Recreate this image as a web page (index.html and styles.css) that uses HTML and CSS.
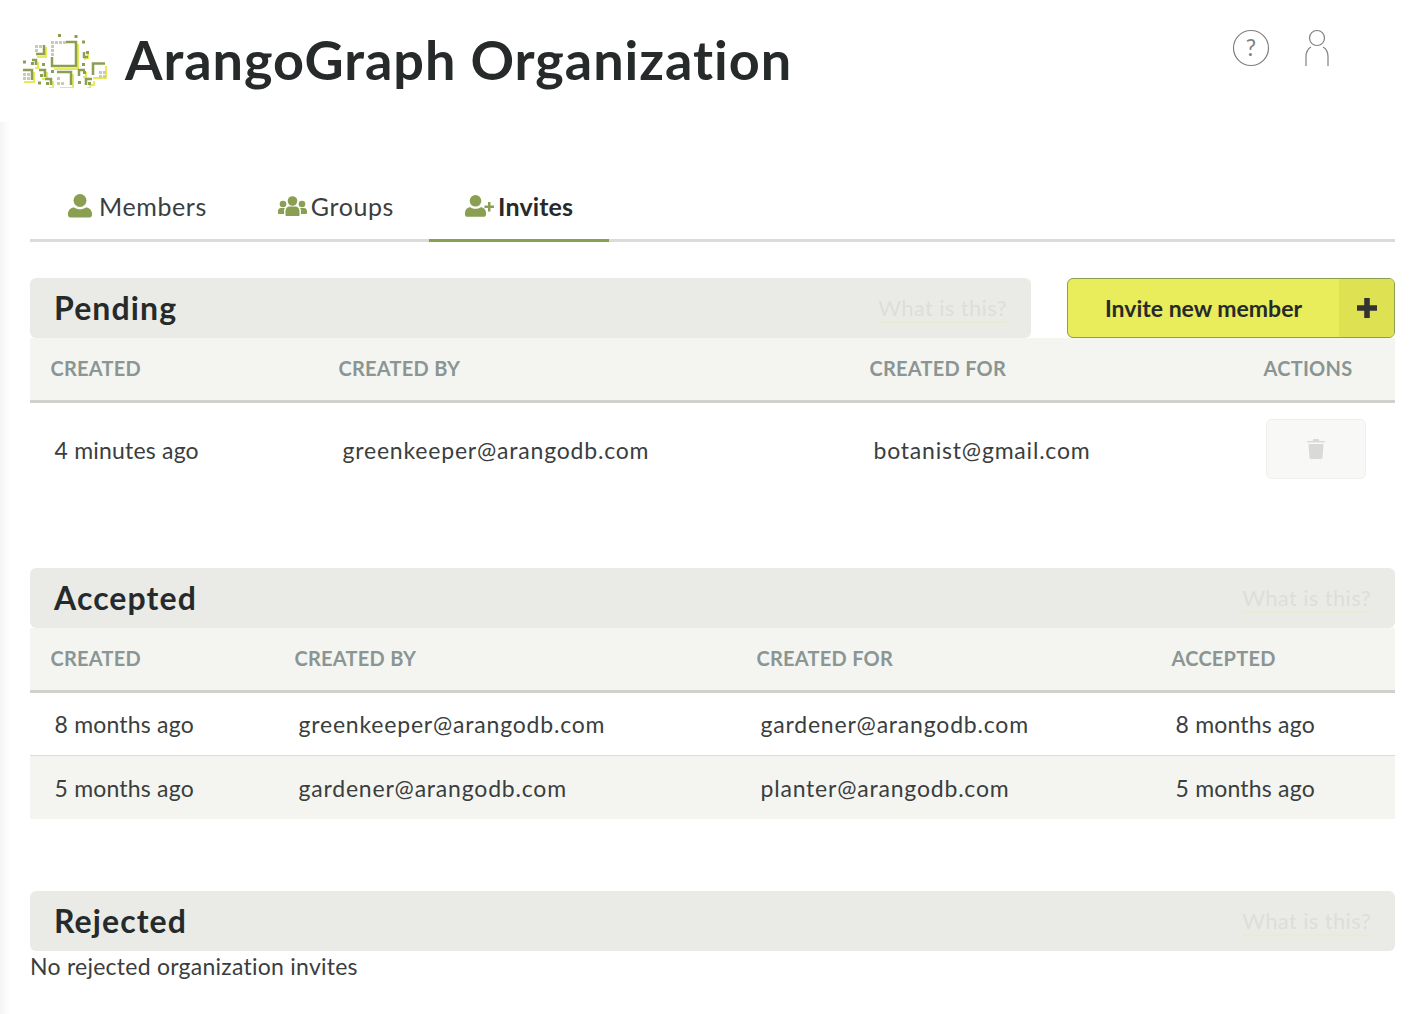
FILE: index.html
```html
<!DOCTYPE html>
<html lang="en">
<head>
    <meta charset="UTF-8">
    <title>ArangoGraph Organization</title>
    <link rel="stylesheet" href="styles.css">
</head>
<body>
    <div class="page">
        <header class="top-bar">
            <div class="brand">
                <svg class="logo" viewBox="23 32 86 56" width="86" height="56">
                    <g fill="none" stroke="#e8ea5a" stroke-width="2">
                        <path d="M78 44v25H54"/>
                        <path d="M46 47v10h-9"/>
                        <path d="M88 54v4h-3v2"/>
                        <path d="M38 62v6h-3"/>
                        <path d="M34 72v10h-10"/>
                        <path d="M47 72v7h-5"/>
                        <path d="M73 74v14H60"/>
                        <path d="M53 81v7h-4"/>
                        <path d="M86 72v5h-3"/>
                        <path d="M94 81v4h-4v3h-3"/>
                        <path d="M106 66v12H93"/>
                    </g>
                    <g fill="none" stroke="#8a9f52" stroke-width="2.500">
                        <path d="M66 42h10v24H52v-9"/>
                        <path d="M44 45v9h-8"/>
                        <path d="M84 52v5h4"/>
                        <path d="M32 60h4v5"/>
                        <path d="M23 70h9v10"/>
                        <path d="M39 70h6v7"/>
                        <path d="M57 72h14v13"/>
                        <path d="M45 79h6v6"/>
                        <path d="M85 70h-6v6"/>
                        <path d="M92 79h-6v6"/>
                        <path d="M105 63.500H93V75"/>
                    </g>
                    <g fill="#8a9f52">
                        <rect x="58" y="34" width="3" height="3"/><rect x="74.500" y="35" width="3" height="3"/>
                        <rect x="82" y="40.500" width="3" height="3"/><rect x="86" y="51" width="3" height="3"/>
                        <rect x="23" y="60.500" width="3" height="3"/><rect x="31" y="62" width="3" height="3"/>
                        <rect x="42" y="63" width="3" height="3"/><rect x="51" y="70" width="3" height="3"/>
                        <rect x="82" y="63" width="3" height="3"/><rect x="38" y="81.500" width="3" height="3"/>
                        <rect x="46" y="82" width="3" height="3"/><rect x="78" y="81" width="3" height="3"/>
                        <rect x="88" y="82" width="3" height="3"/><rect x="40" y="74" width="3" height="3"/>
                        <rect x="83" y="71" width="3" height="3"/>
                    </g>
                    <g fill="#c9ccb0">
                        <rect x="51" y="41" width="3" height="3"/><rect x="55" y="41" width="3" height="3"/>
                        <rect x="59" y="41" width="3" height="3"/><rect x="63" y="41" width="3" height="3"/>
                        <rect x="51" y="45" width="3" height="3"/><rect x="51" y="49" width="3" height="3"/>
                        <rect x="51" y="53" width="3" height="3"/><rect x="35" y="45" width="3" height="3"/>
                        <rect x="39" y="45" width="3" height="3"/><rect x="35" y="49" width="3" height="3"/>
                        <rect x="23" y="73" width="3" height="3"/><rect x="27" y="73" width="3" height="3"/>
                        <rect x="23" y="77" width="3" height="3"/><rect x="27" y="77" width="3" height="3"/>
                        <rect x="57" y="77" width="3" height="3"/><rect x="57" y="82" width="3" height="3"/>
                        <rect x="61" y="82" width="3" height="3"/><rect x="99" y="71" width="3" height="3"/>
                        <rect x="103" y="71" width="3" height="3"/><rect x="99" y="75" width="3" height="3"/>
                        <rect x="103" y="75" width="3" height="3"/>
                    </g>
                </svg>
                <h1>ArangoGraph Organization</h1>
            </div>
            <div class="top-icons">
                <svg class="help-icon" viewBox="0 0 38 38" width="38" height="38">
                    <circle cx="19" cy="19" r="17.500" fill="none" stroke="#808080" stroke-width="1.200"/>
                    <text x="19" y="27" text-anchor="middle">?</text>
                </svg>
                <svg class="user-icon" viewBox="0 0 28 38" width="28" height="38">
                    <g fill="none" stroke="#808080" stroke-width="1.200">
                        <circle cx="14" cy="9" r="7.500"/>
                        <path d="M8 18C4.500 20 3 23 3 28v9M20 18c3.500 2 5 5 5 10v9"/>
                    </g>
                </svg>
            </div>
        </header>

        <nav class="tabs">
            <a class="tab">
                <svg viewBox="0 0 24 24" width="24" height="24"><circle cx="12" cy="6.500" r="6.500"/><path d="M0 20c0-4 3-6.500 6-6.500 2 1.200 4 1.800 6 1.800s4-.6 6-1.800c3 0 6 2.500 6 6.500v1c0 1.500-1 2.500-2.500 2.500h-19C1 23.500 0 22.500 0 21z"/></svg>
                Members
            </a>
            <a class="tab tab-groups">
                <svg viewBox="0 0 29 20" width="29" height="20"><circle cx="14.500" cy="5" r="4.800"/><circle cx="5" cy="8" r="3.300"/><circle cx="24" cy="8" r="3.300"/><path d="M7.500 19v-4c0-3 2-4.500 4-4.500h6c2 0 4 1.500 4 4.500v4c0 .6-.5 1-1 1h-12c-.5 0-1-.4-1-1z"/><path d="M0 17v-2c0-2 1.500-3 3-3h4c-.8 1-1 2-1 3.500V18H1c-.6 0-1-.4-1-1zM29 17v-2c0-2-1.500-3-3-3h-4c.8 1 1 2 1 3.500V18h5c.6 0 1-.4 1-1z"/></svg>
                Groups
            </a>
            <a class="tab active">
                <svg viewBox="0 0 29 22" width="29" height="22"><circle cx="10.500" cy="5.800" r="5.800"/><path d="M0 18c0-3.500 2.500-5.800 5.200-5.800 1.800 1 3.500 1.600 5.300 1.600s3.500-.6 5.300-1.600c2.700 0 5.200 2.300 5.200 5.800v1.500c0 1.400-1 2.300-2.300 2.300H2.300C1 21.800 0 20.900 0 19.500z"/><path d="M23 7h2.500v3.500H29V13h-3.500v3.500H23V13h-3.500v-2.500H23z"/></svg>
                Invites
            </a>
        </nav>

        <section class="block">
            <div class="pending-head">
                <div class="section-head">
                    <h2>Pending</h2>
                    <a class="what-link">What is this?</a>
                </div>
                <button class="invite-btn">
                    <span class="invite-label">Invite new member</span>
                    <span class="invite-plus">
                        <svg viewBox="0 0 18 18" width="20" height="20"><path d="M6.500 0h5v6.500H18v5h-6.500V18h-5v-6.500H0v-5h6.500z"/></svg>
                    </span>
                </button>
            </div>
            <table class="invite-table pending-table">
                <thead>
                    <tr><th>CREATED</th><th>CREATED BY</th><th>CREATED FOR</th><th>ACTIONS</th></tr>
                </thead>
                <tbody>
                    <tr>
                        <td>4 minutes ago</td>
                        <td class="email">greenkeeper@arangodb.com</td>
                        <td class="email">botanist@gmail.com</td>
                        <td>
                            <button class="delete-btn">
                                <svg viewBox="0 0 18 21" width="18" height="21"><path d="M6.500 1h5l1 2H17c.6 0 1 .4 1 1v.500H0V4c0-.6.4-1 1-1h4.500z"/><path d="M1.500 6h15l-1 13.500c0 .8-.7 1.500-1.500 1.500H4c-.8 0-1.500-.7-1.500-1.500z"/></svg>
                            </button>
                        </td>
                    </tr>
                </tbody>
            </table>
        </section>

        <section class="block accepted-block">
            <div class="section-head">
                <h2>Accepted</h2>
                <a class="what-link">What is this?</a>
            </div>
            <table class="invite-table accepted-table">
                <thead>
                    <tr><th>CREATED</th><th>CREATED BY</th><th>CREATED FOR</th><th>ACCEPTED</th></tr>
                </thead>
                <tbody>
                    <tr>
                        <td>8 months ago</td>
                        <td class="email">greenkeeper@arangodb.com</td>
                        <td class="email">gardener@arangodb.com</td>
                        <td>8 months ago</td>
                    </tr>
                    <tr class="alt-row">
                        <td>5 months ago</td>
                        <td class="email">gardener@arangodb.com</td>
                        <td class="email">planter@arangodb.com</td>
                        <td>5 months ago</td>
                    </tr>
                </tbody>
            </table>
        </section>

        <section class="block rejected-block">
            <div class="section-head">
                <h2>Rejected</h2>
                <a class="what-link">What is this?</a>
            </div>
            <p class="empty-note">No rejected organization invites</p>
        </section>
    </div>
</body>
</html>
```

FILE: styles.css
```css
* {
    margin: 0;
    padding: 0;
    box-sizing: border-box;
}

html, body {
    height: 1014px;
    overflow: hidden;
}

body {
    background: white;
    color: #262a2a;
    font-family: Lato, 'Noto Sans', sans-serif;
}

.page {
    height: 1014px;
    padding: 0 28px 0 30px;
    background: linear-gradient(to right, #f4f4f4, white 10px);
}

.top-bar {
    display: flex;
    justify-content: space-between;
    height: 122px;
    margin: 0 -28px 0 -30px;
    padding: 0 92px 0 23px;
    background: white;
}

.brand {
    display: flex;
    align-items: flex-start;
    gap: 16px;
    padding-top: 32px;
}

.brand h1 {
    font-size: 54px;
    font-weight: 700;
    line-height: 56px;
    letter-spacing: 0.95px;
}

.top-icons {
    display: flex;
    gap: 33px;
    padding-top: 29px;
}

.help-icon text {
    font-family: Lato, sans-serif;
    font-size: 23px;
    fill: #808080;
}

.tabs {
    display: flex;
    height: 64px;
    margin-top: 56px;
    border-bottom: 3px solid #dbdbd9;
}

.tab {
    display: flex;
    align-items: center;
    gap: 7px;
    height: 64px;
    padding: 0 35px 5px 38px;
    border-bottom: 3px solid transparent;
    font-size: 25px;
    letter-spacing: 0.6px;
    color: #3a3e3e;
}

.tab svg {
    fill: #8a9f52;
}

.tab-groups {
    gap: 4px;
    padding-left: 36px;
}

.tab.active {
    gap: 4px;
    padding: 0 36px 5px 36px;
    border-bottom-color: #8a9f52;
    font-weight: 700;
    letter-spacing: 0.15px;
    color: #262a2a;
}

.block {
    margin-top: 36px;
}

.accepted-block {
    margin-top: 70px;
}

.rejected-block {
    margin-top: 72px;
}

.pending-head {
    display: flex;
    gap: 36px;
}

.pending-head .section-head {
    flex: 1;
}

.section-head {
    display: flex;
    align-items: center;
    justify-content: space-between;
    height: 60px;
    padding: 0 24px;
    background: #eaebe7;
    border-radius: 6px;
}

.section-head h2 {
    padding-bottom: 2px;
    font-size: 32px;
    font-weight: 700;
    letter-spacing: 1.1px;
    color: #262a2a;
}

.what-link {
    margin-top: 2px;
    font-size: 22px;
    letter-spacing: 0.35px;
    color: #dcdeda;
    border-bottom: 2px solid #e9ebd5;
    line-height: 26px;
}

.invite-btn {
    display: flex;
    width: 328px;
    height: 60px;
    background: #e9ec5b;
    border: 1px solid #8a9f52;
    border-radius: 6px;
    overflow: hidden;
    font-family: inherit;
    color: #262a2a;
}

.invite-label {
    flex: 1;
    align-self: center;
    font-size: 23px;
    font-weight: 700;
    text-align: center;
}

.invite-plus {
    display: flex;
    align-items: center;
    justify-content: center;
    width: 55px;
    height: 100%;
    background: #dee152;
}

.invite-plus svg {
    fill: #333;
}

.invite-table {
    width: 100%;
    table-layout: fixed;
    border-collapse: separate;
    border-spacing: 0;
    font-size: 23px;
    letter-spacing: 0.2px;
}

.invite-table th {
    height: 65px;
    padding: 0 0 2px 20.500px;
    background: #f4f5f1;
    border-bottom: 3px solid #d0d1cc;
    text-align: left;
    font-size: 20px;
    font-weight: 700;
    letter-spacing: 0.25px;
    color: #8a9594;
}

.invite-table td {
    padding: 0 0 0 24.500px;
    color: #3a3e3e;
}

.invite-table .email {
    letter-spacing: 0.8px;
}

.pending-table th:nth-child(1) { width: 288px; }
.pending-table th:nth-child(2) { width: 531px; }
.pending-table th:nth-child(3) { width: 394px; }

.pending-table td {
    height: 95px;
    padding-bottom: 2px;
}

.pending-table td:last-child {
    padding-left: 0;
    padding-bottom: 4px;
}

.delete-btn {
    display: flex;
    align-items: center;
    justify-content: center;
    width: 100px;
    height: 60px;
    margin: 0 0 0 23px;
    background: #f8f9f6;
    border: 1px solid #eeefeb;
    border-radius: 6px;
}

.delete-btn svg {
    fill: #d9dad8;
}

.accepted-table th:nth-child(1) { width: 244px; }
.accepted-table th:nth-child(2) { width: 462px; }
.accepted-table th:nth-child(3) { width: 415px; }

.accepted-table td {
    height: 63px;
    border-bottom: 1px solid #dcdcd8;
}

.accepted-table .alt-row td {
    background: #f4f5f1;
    border-bottom: none;
}

.empty-note {
    margin-top: 1px;
    font-size: 23px;
    line-height: 28px;
    letter-spacing: 0.25px;
    color: #3a3e3e;
}
```
